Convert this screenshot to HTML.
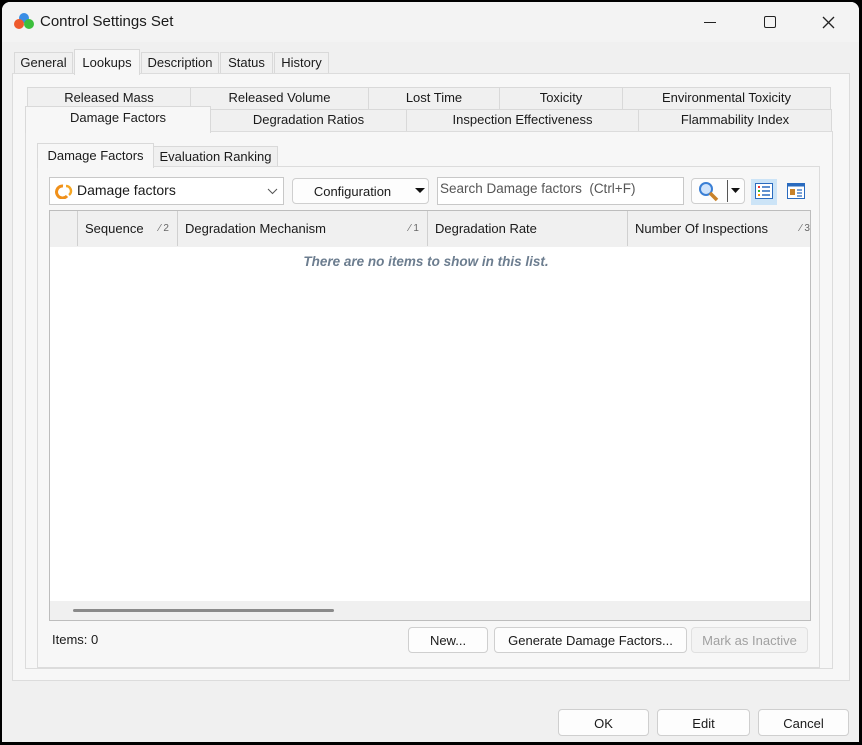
<!DOCTYPE html>
<html><head><meta charset="utf-8"><style>
*{box-sizing:border-box;margin:0;padding:0}
body{width:862px;height:745px;background:#000;font-family:"Liberation Sans",sans-serif;font-size:13px;color:#1a1a1a;position:relative;overflow:hidden}
.a{position:absolute}
.win{left:2px;top:2px;width:857px;height:740px;background:#f0f0f0;border-radius:8px 8px 0 0;overflow:hidden}
.tb{left:0;top:0;width:857px;height:40px;background:#f3f3f3}
.tab{position:absolute;background:#f0f0f0;border:1px solid #d9d9d9;border-bottom:none;text-align:center;line-height:20px;font-size:13px}
.sel{background:#f9f9f9;z-index:2}
.panel{position:absolute;border:1px solid #dcdcdc;background:#f7f7f7}
.btn{position:absolute;background:#fdfdfd;border:1px solid #cfcfcf;border-radius:4px;text-align:center;font-size:13px}
.hd{position:absolute;top:0;height:35px;line-height:36px;border-right:1px solid #d0d0d0;padding-left:7px}
</style></head><body>
<div class="a win">
<div class="a tb"></div>
<svg class="a" style="left:12px;top:10px" width="20" height="18"><circle cx="10" cy="6" r="5" fill="#3a8ee6"/><circle cx="5" cy="12" r="5" fill="#ee5a2c"/><circle cx="15" cy="12" r="5" fill="#3cbf3c"/></svg>
<div class="a" style="left:38px;top:11px;font-size:15px">Control Settings Set</div>
<div class="a" style="left:702px;top:20px;width:12px;height:1px;background:#222"></div>
<div class="a" style="left:762px;top:14px;width:12px;height:12px;border:1.3px solid #222;border-radius:2px"></div>
<svg class="a" style="left:820px;top:14px" width="13" height="13"><path d="M1 1L12 12M12 1L1 12" stroke="#222" stroke-width="1.3"/></svg>

<div class="tab" style="left:12px;top:50px;width:59px">General</div>
<div class="tab sel" style="left:72px;top:47px;width:66px;height:26px;line-height:26px;background:#f7f7f7">Lookups</div>
<div class="tab" style="left:139px;top:50px;width:78px">Description</div>
<div class="tab" style="left:218px;top:50px;width:53px">Status</div>
<div class="tab" style="left:272px;top:50px;width:55px">History</div>
<div class="panel" style="left:10px;top:71px;width:838px;height:608px"></div>

<div class="tab" style="left:25px;top:85px;width:164px;height:22px">Released Mass</div>
<div class="tab" style="left:188px;top:85px;width:179px;height:22px">Released Volume</div>
<div class="tab" style="left:366px;top:85px;width:132px;height:22px">Lost Time</div>
<div class="tab" style="left:497px;top:85px;width:124px;height:22px">Toxicity</div>
<div class="tab" style="left:620px;top:85px;width:209px;height:22px">Environmental Toxicity</div>
<div class="tab sel" style="left:23px;top:104px;width:186px;height:27px;line-height:22px;background:#f7f7f7">Damage Factors</div>
<div class="tab" style="left:208px;top:107px;width:197px;height:22px">Degradation Ratios</div>
<div class="tab" style="left:404px;top:107px;width:233px;height:22px">Inspection Effectiveness</div>
<div class="tab" style="left:636px;top:107px;width:194px;height:22px">Flammability Index</div>
<div class="panel" style="left:23px;top:129px;width:808px;height:538px"></div>

<div class="tab sel" style="left:35px;top:141px;width:117px;height:25px;line-height:24px;background:#f7f7f7">Damage Factors</div>
<div class="tab" style="left:151px;top:144px;width:125px;height:22px">Evaluation Ranking</div>
<div class="panel" style="left:35px;top:164px;width:783px;height:502px;background:#f7f7f7"></div>

<div class="a" style="left:47px;top:175px;width:235px;height:28px;background:#fff;border:1px solid #c8c8c8"></div>
<svg class="a" style="left:52px;top:181px" width="20" height="16"><path d="M9 3A6 6 0 1 0 13 13" stroke="#f0901a" stroke-width="3" fill="none"/><path d="M12 3A5 5 0 0 1 15 12" stroke="#f5a623" stroke-width="2.5" fill="none"/></svg>
<div class="a" style="left:75px;top:180px;font-size:14px">Damage factors</div>
<svg class="a" style="left:265px;top:186px" width="11" height="7"><path d="M1 1L5.5 5.5L10 1" stroke="#555" fill="none"/></svg>
<div class="btn" style="left:290px;top:176px;width:137px;height:26px;line-height:26px;padding-right:16px">Configuration</div>
<svg class="a" style="left:413px;top:186px" width="10" height="6"><path d="M0 0H10L5 5Z" fill="#111"/></svg>
<div class="a" style="left:435px;top:175px;width:247px;height:28px;background:#fff;border:1px solid #c8c8c8;color:#555;padding:3px 2px;font-size:13.5px">Search Damage factors &nbsp;(Ctrl+F)</div>
<div class="btn" style="left:689px;top:176px;width:54px;height:26px"></div>
<svg class="a" style="left:696px;top:179px" width="22" height="22"><circle cx="8" cy="8" r="6" fill="#cfe3fb" stroke="#3a7fd5" stroke-width="2"/><path d="M12 12L19 19" stroke="#c8822a" stroke-width="3.5"/></svg>
<div class="a" style="left:725px;top:178px;width:1px;height:22px;background:#555"></div>
<svg class="a" style="left:729px;top:186px" width="9" height="6"><path d="M0 0H9L4.5 5Z" fill="#111"/></svg>
<div class="a" style="left:749px;top:177px;width:26px;height:26px;background:#cce4f7"></div>
<svg class="a" style="left:753px;top:181px" width="18" height="16"><rect x="0.5" y="0.5" width="17" height="15" fill="#fff" stroke="#2a6bbf"/><rect x="3" y="3" width="2" height="2" fill="#e33"/><rect x="3" y="7" width="2" height="2" fill="#3b3"/><rect x="3" y="11" width="2" height="2" fill="#f90"/><path d="M7 4H15M7 8H15M7 12H15" stroke="#2a6bbf" stroke-width="1.5"/></svg>
<svg class="a" style="left:785px;top:181px" width="18" height="16"><rect x="0.5" y="0.5" width="17" height="15" fill="#fff" stroke="#2a6bbf"/><rect x="0.5" y="0.5" width="17" height="3" fill="#2a6bbf"/><rect x="3" y="6" width="5" height="6" fill="#c8822a"/><path d="M10 7H15M10 10H15M10 13H15" stroke="#2a6bbf" stroke-width="1.3"/></svg>

<div class="a" style="left:47px;top:208px;width:762px;height:411px;background:#fff;border:1px solid #bdbdbd;overflow:hidden">
 <div class="a" style="left:0;top:0;width:762px;height:36px;background:#f0f0f0"></div>
 <div class="hd" style="left:0;width:28px"></div>
 <div class="hd" style="left:28px;width:100px">Sequence<span style="position:absolute;right:8px;font-size:10px;color:#666">⁄ 2</span></div>
 <div class="hd" style="left:128px;width:250px">Degradation Mechanism<span style="position:absolute;right:8px;font-size:10px;color:#666">⁄ 1</span></div>
 <div class="hd" style="left:378px;width:200px">Degradation Rate</div>
 <div class="hd" style="left:578px;width:190px;border:none">Number Of Inspections<span style="position:absolute;right:8px;font-size:10px;color:#666">⁄ 3</span></div>
 <div class="a" style="left:0;top:43px;width:752px;text-align:center;font-style:italic;font-weight:bold;color:#6c7d8f;font-size:13.5px">There are no items to show in this list.</div>
 <div class="a" style="left:0;top:390px;width:762px;height:21px;background:#f0f0f0"></div>
 <div class="a" style="left:23px;top:398px;width:261px;height:3px;background:#8a8a8a;border-radius:2px"></div>
</div>

<div class="a" style="left:50px;top:630px">Items: 0</div>
<div class="btn" style="left:406px;top:625px;width:80px;height:26px;line-height:25px">New...</div>
<div class="btn" style="left:492px;top:625px;width:193px;height:26px;line-height:25px">Generate Damage Factors...</div>
<div class="btn" style="left:689px;top:625px;width:117px;height:26px;line-height:25px;color:#a0a0a0;background:#f3f3f3;border-color:#e0e0e0">Mark as Inactive</div>

<div class="btn" style="left:556px;top:707px;width:91px;height:27px;line-height:27px">OK</div>
<div class="btn" style="left:655px;top:707px;width:93px;height:27px;line-height:27px">Edit</div>
<div class="btn" style="left:756px;top:707px;width:91px;height:27px;line-height:27px">Cancel</div>
</div>
</body></html>
